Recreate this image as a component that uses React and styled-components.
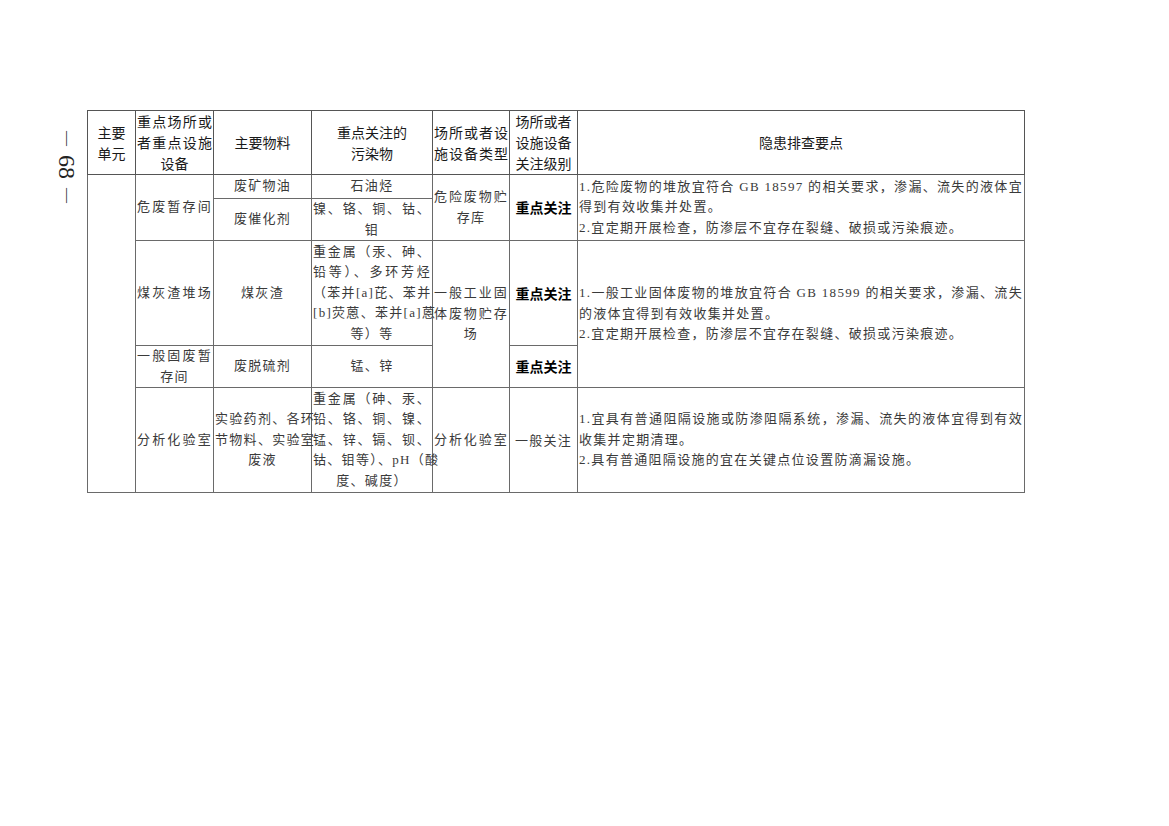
import React from "react";
import styled, { createGlobalStyle } from "styled-components";

const Global = createGlobalStyle`
  html, body { margin: 0; padding: 0; background: #fff; }
  body { font-family: "Liberation Serif", "Noto Sans CJK SC", serif; }
`;

const Page = styled.div`
  display: flex;
  align-items: flex-start;
  padding: 110px 0 0 55px;
  width: 1169px;
  height: 826px;
  box-sizing: border-box;
`;

const PageNo = styled.div`
  width: 24px;
  margin-right: 8px;
  padding-top: 21px;
  display: flex;
  flex-direction: column;
  align-items: center;
  gap: 9px;
  color: #222;
  font-family: "Liberation Serif", serif;
`;

const PageText = styled.span`
  writing-mode: vertical-rl;
  font-size: ${(p) => p.$size}px;
  line-height: 1;
`;

const Table = styled.table`
  border-collapse: collapse;
  table-layout: fixed;
  width: 937px;
  border: 1px solid #4a4a4a;
`;

const Row = styled.tr`
  height: ${(p) => p.$h}px;
`;

const Th = styled.td`
  border: 1px solid #555;
  padding: 0 1px;
  vertical-align: middle;
  text-align: center;
  font-family: "Noto Sans CJK SC", sans-serif;
  font-size: 14px;
  line-height: 21px;
  color: #1a1a1a;
`;

const Td = styled.td`
  border: 1px solid #6a6a6a;
  padding: 0 1px;
  vertical-align: middle;
  text-align: ${(p) => (p.$left ? "left" : "center")};
  font-family: "Liberation Serif", "Noto Sans CJK SC", serif;
  font-size: 13px;
  font-weight: 400;
  letter-spacing: 1.3px;
  line-height: 20.5px;
  color: #3a3a3a;
`;

const Level = styled(Td)`
  font-family: "Noto Sans CJK SC", sans-serif;
  font-weight: ${(p) => (p.$bold ? 700 : 400)};
  font-size: ${(p) => (p.$bold ? 14 : 13)}px;
  letter-spacing: ${(p) => (p.$bold ? 0 : 1.3)}px;
  color: ${(p) => (p.$bold ? "#000" : "#3a3a3a")};
`;

const L = styled.span`
  display: block;
  text-align: ${(p) => (p.$j ? "justify" : "inherit")};
  text-align-last: ${(p) => (p.$j ? "justify" : "auto")};
  white-space: nowrap;
`;

const lines = (arr) =>
  arr.map((t, i) =>
    typeof t === "string" ? (
      <L key={i}>{t}</L>
    ) : (
      <L key={i} $j>
        {t[0]}
      </L>
    )
  );

export default function App() {
  return (
    <>
      <Global />
      <Page>
        <PageNo>
          <PageText $size={15}>—</PageText>
          <PageText $size={24}>68</PageText>
          <PageText $size={15}>—</PageText>
        </PageNo>
        <Table>
          <colgroup>
            <col style={{ width: 48 }} />
            <col style={{ width: 78 }} />
            <col style={{ width: 98 }} />
            <col style={{ width: 121 }} />
            <col style={{ width: 77 }} />
            <col style={{ width: 68 }} />
            <col style={{ width: 447 }} />
          </colgroup>
          <tbody>
            <Row $h={64}>
              <Th>{lines(["主要", "单元"])}</Th>
              <Th>{lines([["重点场所或"], ["者重点设施"], "设备"])}</Th>
              <Th>主要物料</Th>
              <Th>{lines(["重点关注的", "污染物"])}</Th>
              <Th>{lines([["场所或者设"], ["施设备类型"]])}</Th>
              <Th>{lines(["场所或者", "设施设备", "关注级别"])}</Th>
              <Th>隐患排查要点</Th>
            </Row>
            <Row $h={24}>
              <Td rowSpan={6} />
              <Td rowSpan={2}>{lines([["危废暂存间"]])}</Td>
              <Td>废矿物油</Td>
              <Td>石油烃</Td>
              <Td rowSpan={2}>{lines([["危险废物贮"], "存库"])}</Td>
              <Level rowSpan={2} $bold>
                重点关注
              </Level>
              <Td rowSpan={2} $left>
                {lines([
                  ["1.危险废物的堆放宜符合 GB 18597 的相关要求，渗漏、流失的液体宜"],
                  "得到有效收集并处置。",
                  "2.宜定期开展检查，防渗层不宜存在裂缝、破损或污染痕迹。",
                ])}
              </Td>
            </Row>
            <Row $h={42}>
              <Td>废催化剂</Td>
              <Td>{lines([["镍、铬、铜、钴、"], "钼"])}</Td>
            </Row>
            <Row $h={105}>
              <Td>{lines([["煤灰渣堆场"]])}</Td>
              <Td>煤灰渣</Td>
              <Td>
                {lines([
                  ["重金属（汞、砷、"],
                  ["铅等）、多环芳烃"],
                  ["（苯并[a]芘、苯并"],
                  ["[b]荧蒽、苯并[a]蒽"],
                  "等）等",
                ])}
              </Td>
              <Td rowSpan={2}>{lines([["一般工业固"], ["体废物贮存"], "场"])}</Td>
              <Level $bold>重点关注</Level>
              <Td rowSpan={2} $left>
                {lines([
                  ["1.一般工业固体废物的堆放宜符合 GB 18599 的相关要求，渗漏、流失"],
                  "的液体宜得到有效收集并处置。",
                  "2.宜定期开展检查，防渗层不宜存在裂缝、破损或污染痕迹。",
                ])}
              </Td>
            </Row>
            <Row $h={42}>
              <Td>{lines([["一般固废暂"], "存间"])}</Td>
              <Td>废脱硫剂</Td>
              <Td>锰、锌</Td>
              <Level $bold>重点关注</Level>
            </Row>
            <Row $h={105}>
              <Td>{lines([["分析化验室"]])}</Td>
              <Td>{lines([["实验药剂、各环"], ["节物料、实验室"], "废液"])}</Td>
              <Td>
                {lines([
                  ["重金属（砷、汞、"],
                  ["铅、铬、铜、镍、"],
                  ["锰、锌、镉、钡、"],
                  ["钴、钼等）、pH（酸"],
                  "度、碱度）",
                ])}
              </Td>
              <Td>{lines([["分析化验室"]])}</Td>
              <Level>一般关注</Level>
              <Td $left>
                {lines([
                  ["1.宜具有普通阻隔设施或防渗阻隔系统，渗漏、流失的液体宜得到有效"],
                  "收集并定期清理。",
                  "2.具有普通阻隔设施的宜在关键点位设置防滴漏设施。",
                ])}
              </Td>
            </Row>
          </tbody>
        </Table>
      </Page>
    </>
  );
}
